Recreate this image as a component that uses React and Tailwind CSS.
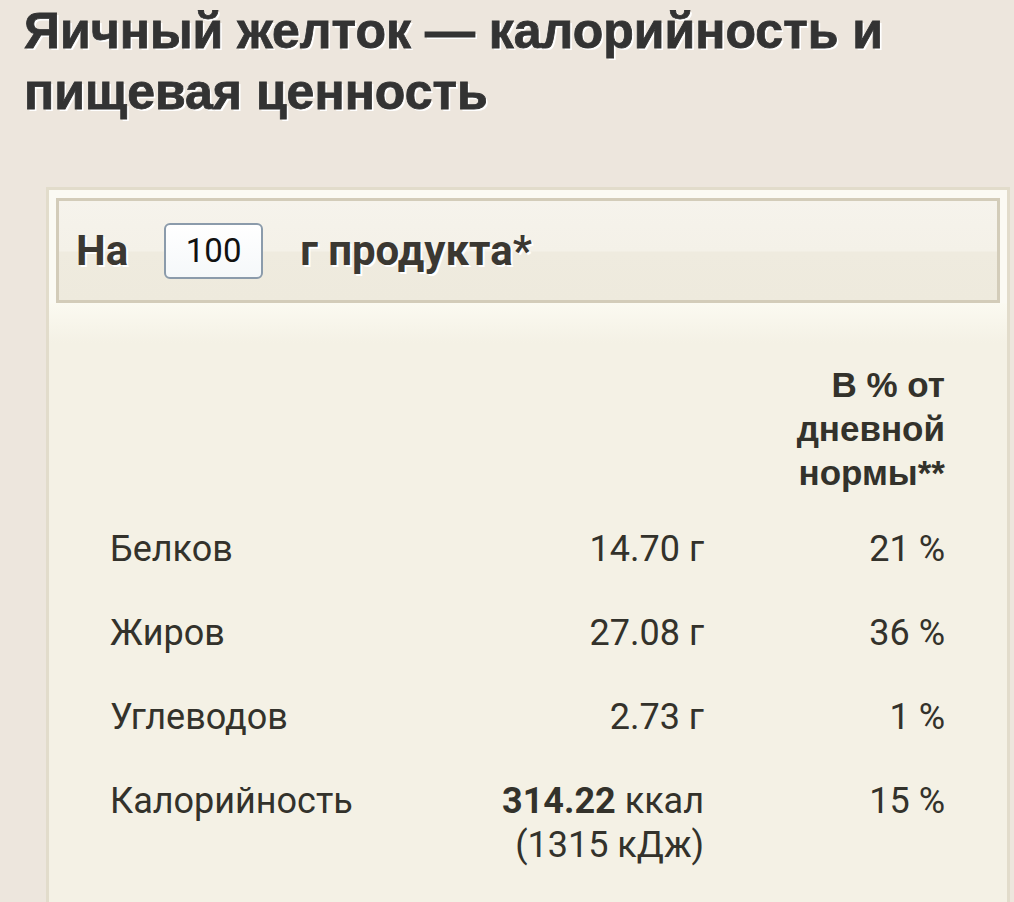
import React from "react";

const rows = [
  { name: "Белков", value: "14.70 г", pct: "21 %" },
  { name: "Жиров", value: "27.08 г", pct: "36 %" },
  { name: "Углеводов", value: "2.73 г", pct: "1 %" },
];

export default function App() {
  return (
    <div className="min-h-[902px] bg-[#ede6dd] pt-[1px]">
      {/* Page title */}
      <h1 className="px-[24px] font-['Liberation_Sans',Arial,sans-serif] text-[50px] font-bold leading-[61px] text-[#333333] [-webkit-text-stroke:0.8px_#333333] [text-shadow:2px_2px_0_#ffffff]">
        Яичный желток — калорийность и пищевая ценность
      </h1>

      {/* Nutrition card */}
      <div className="ml-[46px] mr-[4px] mt-[64px] border-[3px] border-[#e2dccb] bg-[#f4f1e5]">
        <div className="bg-[#fbfaf3] px-[7px] pt-[8px]">
          <div className="flex h-[105px] items-center border-[3px] border-[#d3ccb9] bg-[linear-gradient(to_bottom,#f6f3ec_0%,#f4f1e8_50%,#efebdf_52%,#eeeadd_100%)] pl-[17px] font-['Roboto',sans-serif] text-[42px] font-bold text-[#3b3832] [text-shadow:2px_2px_0_#ffffff]">
            <span>На</span>
            <div className="ml-[36px] mr-[37px] flex h-[56px] w-[99px] items-center justify-center rounded-[6px] border-2 border-[#8b9bab] bg-[linear-gradient(to_bottom,#ffffff,#f5f8fa)] text-[33px] font-normal text-[#111111] [text-shadow:none]">
              100
            </div>
            <span>г продукта*</span>
          </div>
        </div>

        <div className="bg-[linear-gradient(to_bottom,#fbfaf1_0px,#f4f1e5_40px)] pl-[61px] pr-[62px] pb-[20px] font-['Roboto',sans-serif] text-[36px] leading-[44px] text-[#33322b]">
          <div className="flex pt-[60px] pb-[12px]">
            <div className="flex-1" />
            <div className="w-[241px] text-right font-['Liberation_Sans',Arial,sans-serif] text-[35px] font-bold leading-[44px] text-[#33322b]">
              В % от дневной нормы**
            </div>
          </div>

          {rows.map((r) => (
            <div key={r.name} className="flex py-[20px]">
              <div className="flex-1">{r.name}</div>
              <div className="text-right">{r.value}</div>
              <div className="w-[241px] text-right">{r.pct}</div>
            </div>
          ))}

          <div className="flex py-[20px]">
            <div className="flex-1">Калорийность</div>
            <div className="text-right">
              <span className="font-bold">314.22</span> ккал
              <br />
              (1315 кДж)
            </div>
            <div className="w-[241px] text-right">15 %</div>
          </div>
        </div>
      </div>
    </div>
  );
}
